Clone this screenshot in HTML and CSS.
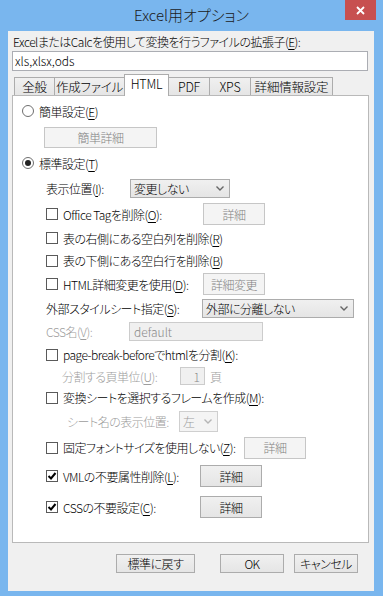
FILE: index.html
```html
<!DOCTYPE html>
<html>
<head>
    <title>Excel用オプション</title>
    <link rel="stylesheet" href="styles.css">
</head>
<body>
    <div class="window">
        <div class="titlebar">
            <span class="title">Excel用オプション</span>
            <span class="close">
                <svg width="9" height="9" viewBox="0 0 9 9"><path d="M1 1L8 8M8 1L1 8" stroke="#fff" stroke-width="1.8"/></svg>
            </span>
        </div>

        <div class="client">
            <div class="ext-label">ExcelまたはCalcを使用して変換を行うファイルの拡張子(<u>E</u>):</div>
            <div class="textbox">xls,xlsx,ods</div>

            <div class="tabs">
                <span class="tab t-gen">全般</span>
                <span class="tab t-make">作成ファイル</span>
                <span class="tab t-html active">HTML</span>
                <span class="tab t-pdf">PDF</span>
                <span class="tab t-xps">XPS</span>
                <span class="tab t-info">詳細情報設定</span>
            </div>

            <div class="panel">
                <div class="row top">
                    <span class="rb"></span><span class="opt">簡単設定(<u>E</u>)</span>
                </div>
                <div class="row">
                    <span class="btn off b-simple">簡単詳細</span>
                </div>
                <div class="row top">
                    <span class="rb on"></span><span class="opt">標準設定(<u>T</u>)</span>
                </div>
                <div class="row indent">
                    <span class="w-pos">表示位置(<u>I</u>):</span>
                    <span class="select s-pos">変更しない<i class="arrow"><svg width="8" height="5" viewBox="0 0 8 5"><path d="M0.5 0.5L4 4L7.5 0.5" fill="none" stroke="#666" stroke-width="1.4"/></svg></i></span>
                </div>
                <div class="row indent">
                    <span class="check w-tag"><span class="cb"></span>Office Tagを削除(<u>O</u>):</span>
                    <span class="btn off b-small">詳細</span>
                </div>
                <div class="row indent">
                    <span class="check"><span class="cb"></span>表の右側にある空白列を削除(<u>R</u>)</span>
                </div>
                <div class="row indent">
                    <span class="check"><span class="cb"></span>表の下側にある空白行を削除(<u>B</u>)</span>
                </div>
                <div class="row indent">
                    <span class="check w-tag"><span class="cb"></span>HTML詳細変更を使用(<u>D</u>):</span>
                    <span class="btn off b-small">詳細変更</span>
                </div>
                <div class="row indent">
                    <span class="w-style">外部スタイルシート指定(<u>S</u>):</span>
                    <span class="select s-style">外部に分離しない<i class="arrow"><svg width="8" height="5" viewBox="0 0 8 5"><path d="M0.5 0.5L4 4L7.5 0.5" fill="none" stroke="#666" stroke-width="1.4"/></svg></i></span>
                </div>
                <div class="row indent">
                    <span class="w-css dim">CSS名(<u>V</u>):</span>
                    <span class="field off f-css">default</span>
                </div>
                <div class="row indent">
                    <span class="check"><span class="cb"></span>page-break-beforeでhtmlを分割(<u>K</u>):</span>
                </div>
                <div class="row sub">
                    <span class="w-split dim">分割する頁単位(<u>U</u>):</span>
                    <span class="field off f-num">1</span>
                    <span class="dim unit">頁</span>
                </div>
                <div class="row indent">
                    <span class="check"><span class="cb"></span>変換シートを選択するフレームを作成(<u>M</u>):</span>
                </div>
                <div class="row sub2">
                    <span class="w-sheet dim">シート名の表示位置:</span>
                    <span class="select off s-left">左<i class="arrow"><svg width="8" height="5" viewBox="0 0 8 5"><path d="M0.5 0.5L4 4L7.5 0.5" fill="none" stroke="#b5b5b5" stroke-width="1.4"/></svg></i></span>
                </div>
                <div class="row indent">
                    <span class="check w-font"><span class="cb"></span>固定フォントサイズを使用しない(<u>Z</u>):</span>
                    <span class="btn off b-small">詳細</span>
                </div>
                <div class="row indent">
                    <span class="check w-vml"><span class="cb on"><svg width="10" height="10" viewBox="0 0 10 10"><path d="M1.5 5L4 7.5L8.5 2" fill="none" stroke="#000" stroke-width="2"/></svg></span>VMLの不要属性削除(<u>L</u>):</span>
                    <span class="btn b-small">詳細</span>
                </div>
                <div class="row indent">
                    <span class="check w-vml"><span class="cb on"><svg width="10" height="10" viewBox="0 0 10 10"><path d="M1.5 5L4 7.5L8.5 2" fill="none" stroke="#000" stroke-width="2"/></svg></span>CSSの不要設定(<u>C</u>):</span>
                    <span class="btn b-small">詳細</span>
                </div>
            </div>

            <div class="footer">
                <span class="btn b-reset">標準に戻す</span>
                <span class="btn b-ok">OK</span>
                <span class="btn b-cancel">キャンセル</span>
            </div>
        </div>
    </div>
</body>
</html>
```

FILE: styles.css
```css
body {
    margin: 0;
    font-family: "Noto Sans CJK JP", "Noto Sans", sans-serif;
    font-size: 12px;
    font-weight: 300;
    letter-spacing: -0.5px;
    font-feature-settings: "palt";
    color: #000;
}

u {
    text-decoration-thickness: 1px;
    text-underline-offset: 2px;
}

.window {
    width: 383px;
    height: 596px;
    background-color: #79b6ee;
    display: flex;
    flex-direction: column;
}

/* barra de titulo */
.titlebar {
    height: 31px;
    display: grid;
    grid-template-columns: 1fr auto 1fr;
    align-items: start;
}

.title {
    grid-column: 2;
    font-size: 15px;
    line-height: 30px;
    letter-spacing: 0;
    color: #1b1b1b;
}

.close {
    grid-column: 3;
    justify-self: end;
    margin-right: 7px;
    width: 31px;
    height: 20px;
    background-color: #c75050;
    display: flex;
    align-items: center;
    justify-content: center;
}

.client {
    margin: 0 9px 0 8px;
    height: 560px;
    background-color: #f0f0f0;
}

.ext-label {
    padding: 3px 0 0 5px;
    height: 16px;
    line-height: 16px;
}

.textbox {
    margin: 1px 0 0 4px;
    width: 356px;
    height: 20px;
    box-sizing: border-box;
    border: 1px solid #abadb3;
    background-color: #fff;
    padding-left: 2px;
    line-height: 18px;
    letter-spacing: 0;
}

/* abas */
.tabs {
    margin: 3px 0 0 6px;
    height: 21px;
    display: flex;
    align-items: flex-end;
}

.tab {
    height: 18px;
    box-sizing: border-box;
    border: 1px solid #acacac;
    border-bottom: none;
    border-right: none;
    background: linear-gradient(#f0f0f0, #e5e5e5);
    display: flex;
    align-items: center;
    justify-content: center;
    line-height: 16px;
    font-size: 12.5px;
    letter-spacing: -0.2px;
    white-space: nowrap;
}

.tab.t-info {
    border-right: 1px solid #acacac;
}

.tab.active {
    height: 22px;
    margin-bottom: -1px;
    border-right: 1px solid #acacac;
    background: #fff;
    position: relative;
    z-index: 1;
    padding-bottom: 3px;
}

.tab.active + .tab {
    border-left: none;
}

.t-gen { width: 40px; }
.t-make { width: 70px; }
.t-html { width: 45px; }
.t-pdf { width: 40px; }
.t-xps { width: 41px; }
.t-info { width: 83px; }

.panel {
    margin-left: 4px;
    width: 357px;
    height: 448px;
    box-sizing: border-box;
    border: 1px solid #b9b9b9;
    background-color: #fff;
    padding-top: 2px;
    display: grid;
    grid-template-rows: 26px 26px 26px 25px 26px 22px 23px 24px 24px 23px 23px 20px 23px 25px 27px 30px 32px;
}

.row {
    display: flex;
    align-items: center;
    white-space: nowrap;
}

.row.top { padding-left: 9px; }
.row.indent { padding-left: 33px; }
.row.sub { padding-left: 49px; }
.row.sub2 { padding-left: 54px; }

.dim { color: #9d9d9d; }

/* radio e checkbox */
.rb {
    width: 12px;
    height: 12px;
    box-sizing: border-box;
    border: 1px solid #6f6f6f;
    border-radius: 50%;
    background-color: #fff;
    margin-right: 5px;
    display: flex;
    align-items: center;
    justify-content: center;
}

.rb.on::after {
    content: "";
    width: 6px;
    height: 6px;
    border-radius: 50%;
    background-color: #222;
}

.check {
    display: flex;
    align-items: center;
}

.cb {
    width: 12px;
    height: 12px;
    box-sizing: border-box;
    border: 1px solid #5a5a5a;
    background-color: #fff;
    margin-right: 5px;
    display: flex;
    align-items: center;
    justify-content: center;
}

.w-pos { width: 84px; }
.w-tag { width: 157px; }
.w-style { width: 156px; }
.w-css { width: 83px; }
.w-split { width: 118px; }
.w-sheet { width: 112px; }
.w-font { width: 198px; }
.w-vml { width: 154px; }

/* botoes */
.btn {
    height: 22px;
    box-sizing: border-box;
    border: 1px solid #acacac;
    background: linear-gradient(#f0f0f0, #e5e5e5);
    display: flex;
    align-items: center;
    justify-content: center;
}

.btn.off {
    border-color: #c6c6c6;
    background: #f4f4f4;
    color: #838383;
}

.b-simple {
    margin-left: 31px;
    width: 113px;
    height: 21px;
}

.b-small { width: 62px; }

.select {
    height: 19px;
    box-sizing: border-box;
    border: 1px solid #acacac;
    background: linear-gradient(#f0f0f0, #e5e5e5);
    display: flex;
    align-items: center;
    padding-left: 3px;
}

.select.off {
    border-color: #cfcfcf;
    background: #f4f4f4;
    color: #9d9d9d;
    height: 21px;
}

.arrow {
    margin-left: auto;
    margin-right: 5px;
    display: flex;
}

.s-pos { width: 100px; }
.s-style { width: 152px; }
.s-left { width: 39px; }

.field {
    height: 19px;
    box-sizing: border-box;
    border: 1px solid #abadb3;
    background-color: #fff;
    display: flex;
    align-items: center;
    padding: 0 4px;
    letter-spacing: 0;
}

.field.off {
    border-color: #cccccc;
    background-color: #f0f0f0;
    color: #8a8a8a;
}

.f-css { width: 134px; }

.f-num {
    width: 25px;
    height: 18px;
    justify-content: flex-end;
}

.unit { margin-left: 5px; }

.footer {
    margin-top: 11px;
    padding-right: 16px;
    display: flex;
    justify-content: flex-end;
}

.footer .btn { height: 19px; }

.b-reset { width: 79px; margin-right: 25px; }
.b-ok { width: 64px; margin-right: 10px; }
.b-cancel { width: 64px; }
```
